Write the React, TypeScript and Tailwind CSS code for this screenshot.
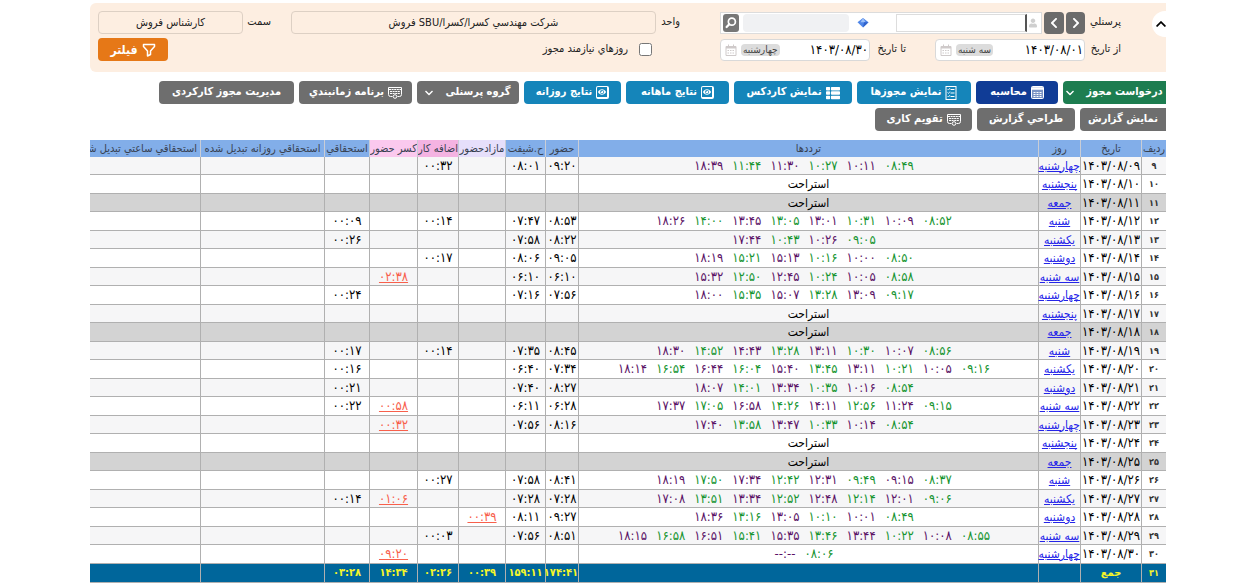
import React from 'react';
import clsx from 'clsx';
import { FaChevronDown, FaChevronLeft, FaChevronRight, FaChevronUp, FaEye, FaThList, FaUser } from 'react-icons/fa';

interface DayRow {
  no: number;
  day: string;
  times?: string[];
  present?: string;
  shift?: string;
  surplus?: string;
  overtime?: string;
  deficit?: string;
  leave?: string;
}

const rows: DayRow[] = [
  { no: 9, day: 'چهارشنبه', times: ['08:49', '10:11', '10:27', '11:30', '11:44', '18:39'], present: '09:20', shift: '08:01', overtime: '00:32' },
  { no: 10, day: 'پنجشنبه' },
  { no: 11, day: 'جمعه' },
  { no: 12, day: 'شنبه', times: ['08:52', '10:09', '10:31', '13:01', '13:05', '13:45', '14:00', '18:26'], present: '08:53', shift: '07:47', overtime: '00:14', leave: '00:09' },
  { no: 13, day: 'یکشنبه', times: ['09:05', '10:26', '10:43', '17:44'], present: '08:22', shift: '07:58', leave: '00:26' },
  { no: 14, day: 'دوشنبه', times: ['08:50', '10:00', '10:16', '15:13', '15:21', '18:19'], present: '09:05', shift: '08:06', overtime: '00:17' },
  { no: 15, day: 'سه شنبه', times: ['08:58', '10:05', '10:24', '12:45', '12:50', '15:32'], present: '06:10', shift: '06:10', deficit: '02:38' },
  { no: 16, day: 'چهارشنبه', times: ['09:17', '13:09', '13:28', '15:07', '15:35', '18:00'], present: '07:56', shift: '07:16', leave: '00:24' },
  { no: 17, day: 'پنجشنبه' },
  { no: 18, day: 'جمعه' },
  { no: 19, day: 'شنبه', times: ['08:56', '10:07', '10:30', '13:11', '13:28', '14:43', '14:52', '18:30'], present: '08:45', shift: '07:35', overtime: '00:14', leave: '00:17' },
  { no: 20, day: 'یکشنبه', times: ['09:16', '10:05', '10:21', '13:11', '13:45', '15:40', '16:04', '16:44', '16:54', '18:14'], present: '07:34', shift: '06:40', leave: '00:16' },
  { no: 21, day: 'دوشنبه', times: ['08:54', '10:16', '10:35', '13:34', '14:01', '18:07'], present: '08:27', shift: '07:40', leave: '00:21' },
  { no: 22, day: 'سه شنبه', times: ['09:15', '11:24', '12:56', '14:11', '14:26', '16:58', '17:05', '17:37'], present: '06:28', shift: '06:11', deficit: '00:58', leave: '00:22' },
  { no: 23, day: 'چهارشنبه', times: ['08:54', '10:14', '10:33', '13:47', '13:58', '17:40'], present: '08:16', shift: '07:56', deficit: '00:32' },
  { no: 24, day: 'پنجشنبه' },
  { no: 25, day: 'جمعه' },
  { no: 26, day: 'شنبه', times: ['08:37', '09:15', '09:49', '12:31', '12:42', '17:34', '17:50', '18:19'], present: '08:41', shift: '07:58', overtime: '00:27' },
  { no: 27, day: 'یکشنبه', times: ['09:06', '12:01', '12:14', '12:48', '12:52', '13:34', '13:51', '17:08'], present: '07:28', shift: '07:28', deficit: '01:06', leave: '00:14' },
  { no: 28, day: 'دوشنبه', times: ['08:49', '10:01', '10:10', '13:05', '13:16', '18:36'], present: '09:27', shift: '08:11', surplus: '00:39' },
  { no: 29, day: 'سه شنبه', times: ['08:55', '10:08', '10:22', '13:44', '13:46', '15:35', '15:41', '16:51', '16:58', '18:15'], present: '08:51', shift: '07:56', overtime: '00:03' },
  { no: 30, day: 'چهارشنبه', times: ['08:06', '--:--'], deficit: '09:20' },
];

const columns = [
  { label: 'رديف', width: 'w-[25px]', color: 'bg-[#82aee9]' },
  { label: 'تاريخ', width: 'w-[61px]', color: 'bg-[#82aee9]' },
  { label: 'روز', width: 'w-[42px]', color: 'bg-[#82aee9]' },
  { label: 'ترددها', width: '', color: 'bg-[#82aee9]' },
  { label: 'حضور', width: 'w-[33px]', color: 'bg-[#82aee9]' },
  { label: 'ح.شیفت', width: 'w-[40px]', color: 'bg-[#82aee9]' },
  { label: 'مازادحضور', width: 'w-[47px]', color: 'bg-[#e6dffb]' },
  { label: 'اضافه کار', width: 'w-[41px]', color: 'bg-[#f4b3e2]' },
  { label: 'کسر حضور', width: 'w-[48px]', color: 'bg-[#fbc9ee]' },
  { label: 'استحقاقي', width: 'w-[45px]', color: 'bg-[#82aee9]' },
  { label: 'استحقاقي روزانه تبديل شده', width: 'w-[124px]', color: 'bg-[#82aee9]' },
  { label: 'استحقاقي ساعتي تبديل شده', width: 'w-[110px]', color: 'bg-[#82aee9]' },
];

const toFa = (text: string | number) => String(text).replace(/\d/g, (d) => '۰۱۲۳۴۵۶۷۸۹'[Number(d)]);

function SearchIcon() {
  return (
    <svg viewBox="0 0 16 16" className="h-3.5 w-3.5" fill="none" stroke="currentColor" strokeWidth="2">
      <circle cx="9" cy="6.5" r="4" />
      <path d="M6 9.500 3 12.500" strokeWidth="2.600" strokeLinecap="round" />
    </svg>
  );
}

function DiamondIcon() {
  return (
    <svg viewBox="0 0 12 10" className="h-2.5 w-3">
      <path d="M6 0 11.5 4.2 6 9.5.5 4.2z" fill="#4f86e8" />
      <path d="M6 0 8.5 4.2H3.5z" fill="#9cc0f8" />
      <path d="M6 9.500 11.500 4.200H7z" fill="#2f62cc" />
    </svg>
  );
}

function CalendarIcon() {
  return (
    <svg viewBox="0 0 12 12" className="mr-1 h-3 w-3" fill="none" stroke="#cfcaca">
      <path d="M1 2.500h10v9H1z" />
      <path d="M1 3.500h10" strokeWidth="2" />
      <path d="M3.500.500v2M8.500.500v2M2.500 6.500h7M2.500 9h7" strokeDasharray="1.500 1" />
    </svg>
  );
}

function FunnelIcon() {
  return (
    <svg viewBox="0 0 14 14" className="h-3.5 w-3.5" fill="none" stroke="currentColor" strokeWidth="1.500" strokeLinejoin="round">
      <path d="M1.500 1.500h11v2L8.500 8v3.500l-3 1.500V8l-4-4.500z" />
    </svg>
  );
}

function CalculatorIcon() {
  return (
    <svg viewBox="0 0 13 13" className="h-[13px] w-[13px]" fill="none" stroke="currentColor">
      <rect x=".5" y=".5" width="12" height="12" rx="1" fill="currentColor" fillOpacity=".45" />
      <path d="M1 2.500h11" strokeWidth="2.500" />
      <path d="M2.500 6.500h8M2.500 8.500h8M2.500 10.500h8" strokeDasharray="2 1" />
    </svg>
  );
}

function ChecklistIcon() {
  return (
    <svg viewBox="0 0 12 14" className="h-3.5 w-3" fill="none" stroke="currentColor">
      <rect x="1" y=".5" width="10" height="13" />
      <path d="M5.500 3.500H9.500M5.500 7H9.500M5.500 10.500H9.500" />
      <path d="m2.500 3 1 1 1.500-2M2.500 6.500l1 1 1.500-2M2.500 10l1 1 1.500-2" strokeWidth=".8" />
    </svg>
  );
}

function KeyboardIcon() {
  return (
    <svg viewBox="0 0 14 12" className="h-3 w-3.5" fill="none" stroke="currentColor">
      <path d="M4.500 9.500H2.500a2 2 0 0 1-2-2V.500h13v7a2 2 0 0 1-2 2H9.500" />
      <path d="M1 2.500h12M2 4.500h10M2 6.500h10" strokeWidth="1.200" strokeDasharray="2 .6" />
      <circle cx="7" cy="9.500" r="1.800" />
    </svg>
  );
}

function ViewIcon() {
  return (
    <span className="flex h-[13px] w-[13px] items-center justify-center rounded-[2px] border border-r-2 border-b-2 border-white">
      <FaEye className="h-2 w-2" />
    </span>
  );
}

interface ToolButtonProps {
  className: string;
  icon?: React.ReactNode;
  menu?: boolean;
  children: React.ReactNode;
}

function ToolButton({ className, icon, menu, children }: ToolButtonProps) {
  return (
    <button
      type="button"
      className={clsx('flex h-[23px] shrink-0 items-center justify-center gap-1 rounded whitespace-nowrap text-[11px] font-bold text-white', className)}
    >
      {icon}
      <span>{children}</span>
      {menu && <FaChevronDown className="mr-2 h-2.5 w-2" />}
    </button>
  );
}

interface DateFieldProps {
  id: string;
  label: string;
  value: string;
  weekday: string;
  className: string;
}

function DateField({ id, label, value, weekday, className }: DateFieldProps) {
  return (
    <div className={clsx('flex items-center justify-between', className)}>
      <label htmlFor={id}>{label}</label>
      <div className="flex h-[22px] w-[150px] items-center rounded border border-[#d9d9d9] bg-white pr-px pl-1">
        <input id={id} defaultValue={toFa(value)} className="min-w-0 flex-1 text-[13px] text-black outline-none" />
        <span className="rounded bg-[#dcdcdc] px-[2px] text-[10px] leading-3 text-[#444]">{weekday}</span>
        <CalendarIcon />
      </div>
    </div>
  );
}

function FilterPanel() {
  return (
    <section className="flex h-[69px] rounded-l-md bg-[#fdeee1] pt-2 pl-2 text-[11px] text-[#222]">
      <div className="w-[45px] shrink-0 overflow-hidden">
        <button type="button" aria-label="بستن فیلتر" className="-mr-3 flex h-[26px] w-[26px] items-center rounded-full bg-white pr-3 text-black">
          <FaChevronUp className="h-3 w-2.5" />
        </button>
      </div>
      <div className="flex min-w-0 flex-1 flex-col gap-1">
        <div className="flex h-[23px] items-center">
          <div className="flex w-[401px] shrink-0 items-center justify-between">
            <label htmlFor="person">پرسنلي</label>
            <div className="flex gap-[2px]">
              <button type="button" aria-label="قبلی" className="flex h-[22px] w-[19px] items-center justify-center rounded bg-[#6b6b6b] text-white">
                <FaChevronRight className="h-3 w-3" />
              </button>
              <button type="button" aria-label="بعدی" className="flex h-[22px] w-5 items-center justify-center rounded bg-[#6b6b6b] text-white">
                <FaChevronLeft className="h-3 w-3" />
              </button>
              <div className="flex h-[22px] w-[322px] items-center border border-[#dcdcdc] bg-white px-[2px]">
                <FaUser className="mx-[2px] h-2.5 w-2 text-[#cfcfcf]" />
                <input id="person" className="h-[18px] w-[131px] border border-r-2 border-[#ddd] border-r-[#555] outline-none" />
                <span className="flex-1" />
                <DiamondIcon />
                <input aria-label="نام" readOnly className="mr-2 h-[18px] w-[106px] rounded-sm bg-[#f0f1f3] outline-none" />
                <button type="button" aria-label="جستجو" className="mr-1 flex h-[18px] w-4 items-center justify-center rounded-[3px] bg-[#777] text-white">
                  <SearchIcon />
                </button>
              </div>
            </div>
          </div>
          <label htmlFor="unit" className="mr-10 w-6 shrink-0">واحد</label>
          <input id="unit" readOnly defaultValue="شرکت مهندسي کسرا/کسرا/SBU فروش" className="h-[23px] min-w-0 flex-1 rounded border border-[#ddd0c4] text-center outline-none" />
          <label htmlFor="role" className="mr-5 w-7 shrink-0">سمت</label>
          <input id="role" readOnly defaultValue="کارشناس فروش" className="h-[23px] w-[145px] shrink-0 rounded border border-[#ddd0c4] text-center outline-none" />
        </div>
        <div className="flex h-[23px] items-center">
          <DateField id="from" label="از تاريخ" value="1403/08/01" weekday="سه شنبه" className="w-[186px]" />
          <DateField id="to" label="تا تاريخ" value="1403/08/30" weekday="چهارشنبه" className="mr-[29px] w-[186px]" />
          <label className="mr-[68px] flex items-center gap-[11px]">
            <input type="checkbox" className="h-[13px] w-[13px]" />
            روزهاي نيازمند مجوز
          </label>
          <button type="button" className="mr-auto flex h-[23px] w-[70px] items-center justify-center gap-1 rounded bg-[#e67817] text-[12px] font-bold text-white">
            <FunnelIcon />
            فیلتر
          </button>
        </div>
      </div>
    </section>
  );
}

function Toolbar() {
  return (
    <nav className="mt-[9px] flex flex-col gap-1 overflow-hidden">
      <div className="flex gap-[5px]">
        <ToolButton className="w-[103px] rounded-r-none bg-[#1d7d50]" menu>درخواست مجوز</ToolButton>
        <ToolButton className="w-[82px] bg-[#103c96]" icon={<CalculatorIcon />}>محاسبه</ToolButton>
        <ToolButton className="w-[114px] bg-[#1585ba]" icon={<ChecklistIcon />}>نمايش مجوزها</ToolButton>
        <ToolButton className="w-[118px] bg-[#1585ba]" icon={<FaThList className="h-3.5 w-3.5" />}>نمایش کاردکس</ToolButton>
        <ToolButton className="w-[103px] bg-[#1585ba]" icon={<ViewIcon />}>نتايج ماهانه</ToolButton>
        <ToolButton className="w-[97px] bg-[#1585ba]" icon={<ViewIcon />}>نتايج روزانه</ToolButton>
        <ToolButton className="w-[102px] bg-[#6e6e6e]" menu>گروه پرسنلی</ToolButton>
        <ToolButton className="w-[113px] bg-[#6e6e6e]" icon={<KeyboardIcon />}>برنامه زمانبندي</ToolButton>
        <ToolButton className="w-[135px] bg-[#6e6e6e]">مدیریت مجوز کارکردی</ToolButton>
      </div>
      <div className="flex gap-[5px]">
        <ToolButton className="w-[86px] rounded-r-none bg-[#6e6e6e]">نمايش گزارش</ToolButton>
        <ToolButton className="w-[98px] bg-[#6e6e6e]">طراحي گزارش</ToolButton>
        <ToolButton className="w-[97px] bg-[#6e6e6e]" icon={<KeyboardIcon />}>تقویم کاری</ToolButton>
      </div>
    </nav>
  );
}

function Traffic({ times }: { times?: string[] }) {
  if (!times) return <span className="text-[12px]">استراحت</span>;
  return (
    <div className="flex justify-center">
      {times.map((time, i) => (
        <span key={time} className={clsx('mr-[9px]', i % 2 === 0 ? 'text-[#15942f]' : 'text-[#5b1266]')}>
          {toFa(time)}
        </span>
      ))}
    </div>
  );
}

function Warning({ value }: { value?: string }) {
  if (!value) return null;
  return <a href="#" className="text-[#f8604c] underline">{toFa(value)}</a>;
}

const cell = 'border-l border-b border-[#b0b0b0] p-0 whitespace-nowrap';

function Timesheet() {
  return (
    <table className="mt-[9px] w-full table-fixed border-separate border-spacing-0 text-center text-[13px] leading-4 text-black">
      <thead>
        <tr className="h-[17px]">
          {columns.map((col) => (
            <th
              key={col.label}
              className={clsx('overflow-hidden border-l border-[#c9cdd6] p-0 text-[11px] font-normal whitespace-nowrap text-[#374151] last:border-l-0 last:pr-[3px] last:text-right', col.width, col.color)}
            >
              {col.label}
            </th>
          ))}
        </tr>
      </thead>
      <tbody>
        {rows.map((row) => (
          <tr
            key={row.no}
            className={clsx('odd:h-[18px] even:h-[19px]', row.day === 'جمعه' ? 'bg-[#d3d3d3]' : row.no % 2 ? 'bg-[#f6f6f7]' : 'bg-white')}
          >
            <td className={clsx(cell, 'text-[9px] font-bold text-[#333]')}>{toFa(row.no)}</td>
            <td className={cell}>{toFa(`1403/08/${String(row.no).padStart(2, '0')}`)}</td>
            <td className={clsx(cell, 'text-[12px]')}>
              <a href="#" className="text-[#2525e8] underline">{row.day}</a>
            </td>
            <td className={cell}><Traffic times={row.times} /></td>
            <td className={cell}>{toFa(row.present ?? '')}</td>
            <td className={cell}>{toFa(row.shift ?? '')}</td>
            <td className={cell}><Warning value={row.surplus} /></td>
            <td className={cell}>{toFa(row.overtime ?? '')}</td>
            <td className={cell}><Warning value={row.deficit} /></td>
            <td className={cell}>{toFa(row.leave ?? '')}</td>
            <td className={cell} />
            <td className={clsx(cell, 'border-l-0')} />
          </tr>
        ))}
      </tbody>
      <tfoot>
        <tr className="h-[19px] bg-[#00669b] text-[11px] font-bold text-[#f5f52a]">
          <td className={clsx(cell, 'text-[9px]')}>{toFa(31)}</td>
          <td className={cell}>جمع</td>
          <td className={cell} />
          <td className={cell} />
          {['174:41', '159:11', '00:39', '02:26', '14:34', '03:28'].map((total) => (
            <td key={total} className={cell}>{toFa(total)}</td>
          ))}
          <td className={cell} />
          <td className={clsx(cell, 'border-l-0')} />
        </tr>
      </tfoot>
    </table>
  );
}

export default function App() {
  return (
    <main dir="rtl" className="bg-white pt-[3px] pr-[84px] pl-[90px] font-['DejaVu_Sans_Condensed','DejaVu_Sans',sans-serif]">
      <FilterPanel />
      <Toolbar />
      <Timesheet />
    </main>
  );
}
